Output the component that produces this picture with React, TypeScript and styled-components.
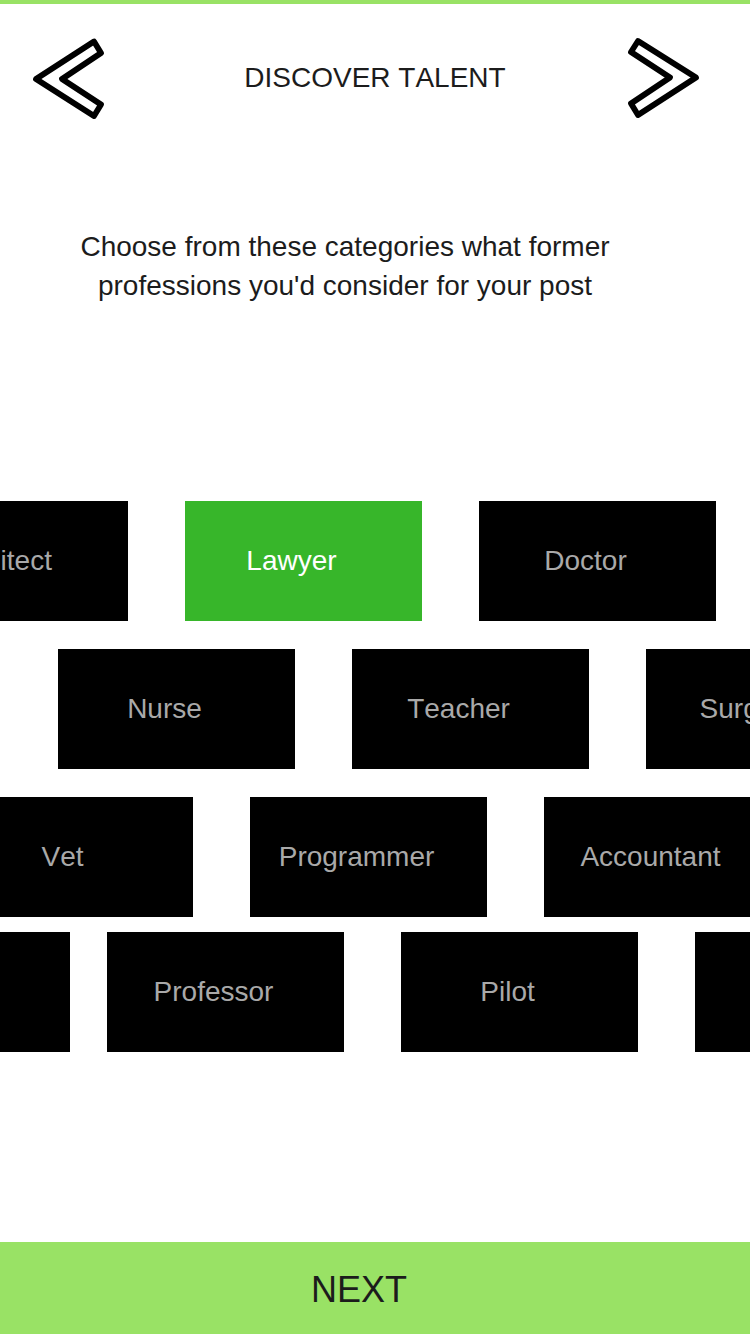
import React, { useState } from "react";
import styled, { createGlobalStyle } from "styled-components";

const GlobalStyle = createGlobalStyle`
  * {
    box-sizing: border-box;
  }
  body {
    margin: 0;
    background: #ffffff;
    color: #1c1c1c;
    font-family: "Liberation Sans", Arial, sans-serif;
    font-kerning: none;
  }
  button {
    margin: 0;
    padding: 0;
    border: 0;
    font-family: inherit;
    font-kerning: inherit;
    cursor: pointer;
  }
`;

const Screen = styled.div`
  display: flex;
  flex-direction: column;
  min-height: 100vh;
  overflow: hidden;
  border-top: 4px solid #99e265;
`;

const Header = styled.header`
  display: grid;
  grid-template-columns: 1fr auto 1fr;
  align-items: center;
  padding-top: 32px;
`;

const Title = styled.h1`
  margin: 0;
  font-size: 28px;
  font-weight: 400;
  line-height: 36px;
  white-space: nowrap;
`;

const ArrowButton = styled.button<{ $side: "start" | "end" }>`
  display: block;
  justify-self: ${(p) => p.$side};
  width: 76px;
  height: 84px;
  margin: ${(p) => (p.$side === "start" ? "0 0 0 31px" : "0 49px 0 0")};
  background: none;

  svg {
    display: block;
    fill: none;
    stroke: #000000;
    stroke-width: 5.8;
    stroke-linejoin: round;
  }
`;

const Intro = styled.p`
  margin: 107px 60px 0 0;
  font-size: 28px;
  line-height: 39px;
  text-align: center;

  span {
    display: block;
  }
`;

const Categories = styled.main`
  margin: 196px 0 64px;
`;

const Row = styled.div<{ $shift: number; $top: number }>`
  display: flex;
  margin-top: ${(p) => p.$top}px;
  margin-left: calc(50% - ${(p) => p.$shift}px);
`;

const Tile = styled.button<{ $gap: number }>`
  flex: 0 0 237px;
  height: 120px;
  margin-right: ${(p) => p.$gap}px;
  padding-right: 24px;
  background: #000000;
  color: #a9a9a9;
  font-size: 28px;
  line-height: 36px;

  &[aria-pressed="true"] {
    background: #37b62a;
    color: #ffffff;
  }
`;

const NextButton = styled.button`
  width: 100%;
  height: 92px;
  margin-top: auto;
  padding: 4px 32px 0 0;
  background: #99e265;
  color: #1c1c1c;
  font-size: 36px;
  line-height: 44px;
`;

interface Category {
  id: string;
  label?: string;
  gap?: number;
}

const rows: { shift: number; top: number; items: Category[] }[] = [
  {
    shift: 484,
    top: 0,
    items: [
      { id: "architect", label: "Architect" },
      { id: "lawyer", label: "Lawyer" },
      { id: "doctor", label: "Doctor" },
    ],
  },
  {
    shift: 317,
    top: 28,
    items: [
      { id: "nurse", label: "Nurse" },
      { id: "teacher", label: "Teacher" },
      { id: "surgeon", label: "Surgeon" },
    ],
  },
  {
    shift: 419,
    top: 28,
    items: [
      { id: "vet", label: "Vet" },
      { id: "programmer", label: "Programmer" },
      { id: "accountant", label: "Accountant" },
    ],
  },
  {
    shift: 542,
    top: 15,
    items: [
      { id: "previous", gap: 37 },
      { id: "professor", label: "Professor" },
      { id: "pilot", label: "Pilot" },
      { id: "more" },
    ],
  },
];

export default function App() {
  const [selected, setSelected] = useState<string[]>(["lawyer"]);

  const toggle = (id: string) =>
    setSelected((current) =>
      current.includes(id) ? current.filter((x) => x !== id) : [...current, id]
    );

  return (
    <>
      <GlobalStyle />
      <Screen>
        <Header>
          <ArrowButton type="button" $side="start" aria-label="Back">
            <svg width="76" height="84" viewBox="31 36 76 84" aria-hidden="true">
              <path d="M36 79 94 41.500 101 53 62 79 101 104.500 94 116Z" />
            </svg>
          </ArrowButton>
          <Title>DISCOVER TALENT</Title>
          <ArrowButton type="button" $side="end" aria-label="Forward">
            <svg width="76" height="84" viewBox="625 36 76 84" aria-hidden="true">
              <path d="M696 77.500 638 41 631 52 670 77.500 631 103.500 638 115Z" />
            </svg>
          </ArrowButton>
        </Header>
        <Intro>
          <span>Choose from these categories what former</span>
          <span>professions you'd consider for your post</span>
        </Intro>
        <Categories>
          {rows.map((row) => (
            <Row key={row.shift} $shift={row.shift} $top={row.top}>
              {row.items.map((item) => (
                <Tile
                  key={item.id}
                  type="button"
                  $gap={item.gap ?? 57}
                  aria-label={item.label ?? `${item.id} professions`}
                  aria-pressed={selected.includes(item.id)}
                  onClick={() => toggle(item.id)}
                >
                  {item.label}
                </Tile>
              ))}
            </Row>
          ))}
        </Categories>
        <NextButton type="button">NEXT</NextButton>
      </Screen>
    </>
  );
}
